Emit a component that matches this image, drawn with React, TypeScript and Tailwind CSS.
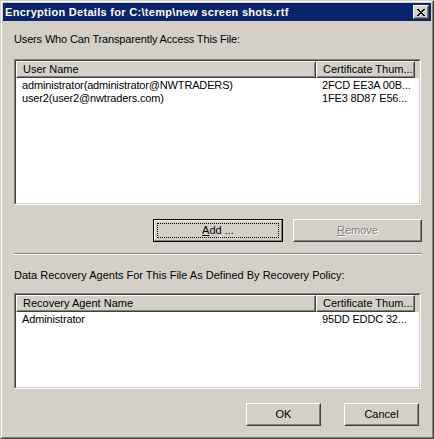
import React from "react";

const font = { fontFamily: '"Liberation Sans", Arial, sans-serif' };

function RaisedButton({
  children,
  width,
  isDefault,
}: {
  children: React.ReactNode;
  width: string;
  isDefault?: boolean;
}) {
  if (isDefault) {
    return (
      <div className={`${width} h-[23px] border border-black`}>
        <div className="h-full w-full border border-t-white border-l-white border-r-[#808080] border-b-[#808080] p-[2px]">
          <div className="h-full w-full border border-dotted border-black flex items-center justify-center text-[11px] text-black">
            {children}
          </div>
        </div>
      </div>
    );
  }
  return (
    <div className={`${width} h-[23px] border border-t-white border-l-white border-r-[#404040] border-b-[#404040]`}>
      <div className="h-full w-full border border-t-[#d4d0c8] border-l-[#d4d0c8] border-r-[#808080] border-b-[#808080] flex items-center justify-center text-[11px] text-black">
        {children}
      </div>
    </div>
  );
}

function HeaderCell({ children, width }: { children?: React.ReactNode; width: string }) {
  return (
    <div className={`${width} h-full border border-t-white border-l-white border-r-[#404040] border-b-[#404040] shrink-0`}>
      <div className="h-full w-full border border-t-[#d4d0c8] border-l-[#d4d0c8] border-r-[#808080] border-b-[#808080] flex items-center pl-[5px] text-[11px] text-black whitespace-nowrap overflow-hidden">
        {children}
      </div>
    </div>
  );
}

function ListBox({
  height,
  col1,
  rows,
}: {
  height: string;
  col1: string;
  rows: [string, string][];
}) {
  return (
    <div className={`w-[407px] ${height} border border-t-[#808080] border-l-[#808080] border-r-white border-b-white`}>
      <div className="h-full w-full border border-t-[#404040] border-l-[#404040] border-r-[#d4d0c8] border-b-[#d4d0c8] bg-white flex flex-col">
        <div className="h-[17px] flex bg-[#d4d0c8]">
          <HeaderCell width="w-[300px]">{col1}</HeaderCell>
          <HeaderCell width="w-[99px]">Certificate Thum...</HeaderCell>
          <div className="flex-1 h-full" />
        </div>
        <div className="flex flex-col pt-px">
          {rows.map(([a, b]) => (
            <div key={a} className="h-[13px] flex items-center text-[11px] text-black whitespace-nowrap tracking-[-0.15px]">
              <div className="w-[300px] pl-[6px]">{a}</div>
              <div className="w-[99px] pl-[6px]">{b}</div>
            </div>
          ))}
        </div>
      </div>
    </div>
  );
}

export default function App() {
  return (
    <div style={font} className="w-[434px] h-[439px] bg-[#d4d0c8] border border-t-[#d4d0c8] border-l-[#d4d0c8] border-r-[#404040] border-b-[#404040]">
      <div className="h-full w-full border border-t-white border-l-white border-r-[#808080] border-b-[#808080] p-px flex flex-col">
        {/* Title bar */}
        <div className="h-[18px] bg-[#0a246a] flex items-center pl-[2px] pr-[2px] shrink-0">
          <div className="flex-1 text-white font-bold text-[11px] tracking-[0.3px] whitespace-nowrap">
            Encryption Details for C:\temp\new screen shots.rtf
          </div>
          <div className="w-[16px] h-[14px] bg-[#d4d0c8] border border-t-white border-l-white border-r-[#404040] border-b-[#404040]">
            <div className="h-full w-full border border-t-[#d4d0c8] border-l-[#d4d0c8] border-r-[#808080] border-b-[#808080] flex items-center justify-center">
              <svg width="8" height="7" viewBox="0 0 8 7" shapeRendering="crispEdges">
                <path
                  fill="#000"
                  d="M0 0h2v1h-2zM6 0h2v1h-2zM1 1h2v1h-2zM5 1h2v1h-2zM2 2h4v1h-4zM3 3h2v1h-2zM2 4h4v1h-4zM1 5h2v1h-2zM5 5h2v1h-2zM0 6h2v1h-2zM6 6h2v1h-2z"
                />
              </svg>
            </div>
          </div>
        </div>

        {/* Content */}
        <div className="flex flex-col pl-[11px] text-[11px] text-black">
          <div className="mt-[12px] h-[13px] leading-[13px] tracking-[-0.15px]">Users Who Can Transparently Access This File:</div>
          <div className="mt-[13px]">
            <ListBox
              height="h-[146px]"
              col1="User Name"
              rows={[
                ["administrator(administrator@NWTRADERS)", "2FCD EE3A 00B..."],
                ["user2(user2@nwtraders.com)", "1FE3 8D87 E56..."],
              ]}
            />
          </div>
          <div className="mt-[14px] flex gap-[10px] pl-[139px]">
            <RaisedButton width="w-[130px]" isDefault>
              <span>
                <span className="underline">A</span>dd ...
              </span>
            </RaisedButton>
            <RaisedButton width="w-[129px]">
              <span className="text-[#808080] [text-shadow:1px_1px_0_#ffffff]">
                <span className="underline">R</span>emove
              </span>
            </RaisedButton>
          </div>
          <div className="mt-[11px] w-[408px] h-[2px] border-t border-t-[#808080] border-b border-b-white" />
          <div className="mt-[14px] h-[13px] leading-[13px]">
            Data Recovery Agents For This File As Defined By Recovery Policy:
          </div>
          <div className="mt-[11px]">
            <ListBox
              height="h-[96px]"
              col1="Recovery Agent Name"
              rows={[["Administrator", "95DD EDDC 32..."]]}
            />
          </div>
          <div className="mt-[14px] flex gap-[23px] pl-[232px]">
            <RaisedButton width="w-[75px]">OK</RaisedButton>
            <RaisedButton width="w-[75px]">Cancel</RaisedButton>
          </div>
        </div>
      </div>
    </div>
  );
}
